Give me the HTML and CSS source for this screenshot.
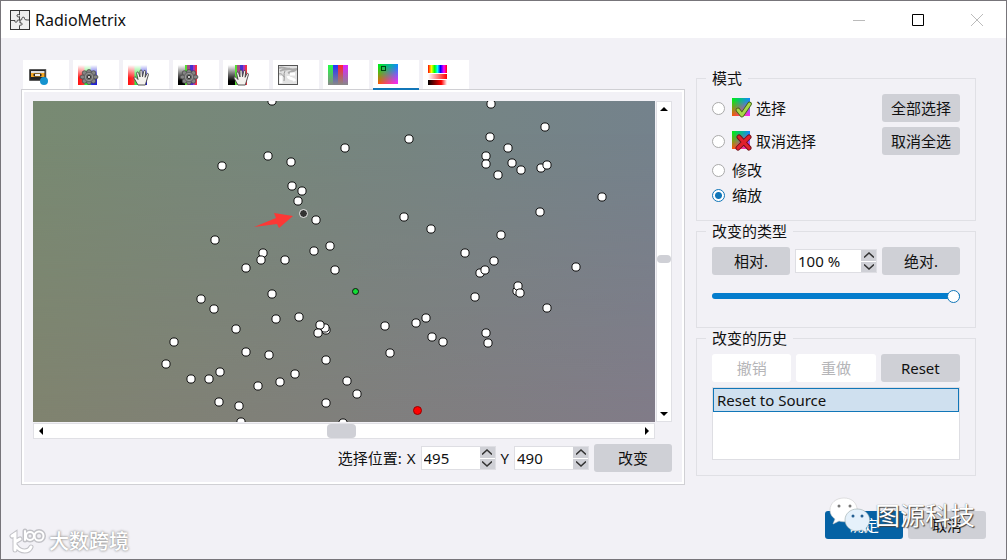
FILE: index.html
```html
<!DOCTYPE html>
<html lang="zh-CN">
<head>
<meta charset="utf-8">
<title>RadioMetrix</title>
<link rel="stylesheet" href="styles.css">
</head>
<body>
<svg class="defs" aria-hidden="true">
  <defs>
    <linearGradient id="rgb"><stop offset="0" stop-color="#f11"/><stop offset=".3" stop-color="#f33"/><stop offset=".38" stop-color="#3e4"/><stop offset=".62" stop-color="#3e4"/><stop offset=".72" stop-color="#22e"/><stop offset="1" stop-color="#22c"/></linearGradient>
    <linearGradient id="fade" x2="0" y2="1"><stop offset="0" stop-color="#fff"/><stop offset=".65" stop-color="#fff" stop-opacity="0"/></linearGradient>
    <linearGradient id="dark" x2="0" y2="1"><stop offset="0" stop-color="#fff"/><stop offset=".8" stop-color="#000"/></linearGradient>
    <linearGradient id="grayfade" x2="0" y2="1"><stop offset="0" stop-color="#888" stop-opacity="0"/><stop offset="1" stop-color="#888"/></linearGradient>
    <linearGradient id="hueA"><stop offset="0" stop-color="#0e1"/><stop offset="1" stop-color="#18f"/></linearGradient>
    <linearGradient id="hueB"><stop offset="0" stop-color="#f50"/><stop offset="1" stop-color="#f2f"/></linearGradient>
    <linearGradient id="down" x2="0" y2="1"><stop offset=".1" stop-color="#fff" stop-opacity="0"/><stop offset="1" stop-color="#fff"/></linearGradient>
    <mask id="downmask" maskContentUnits="objectBoundingBox"><rect width="1" height="1" fill="url(#down)"/></mask>
    <linearGradient id="rainbow"><stop offset="0" stop-color="#f00"/><stop offset=".18" stop-color="#ff0"/><stop offset=".35" stop-color="#0f0"/><stop offset=".5" stop-color="#0ff"/><stop offset=".66" stop-color="#00f"/><stop offset=".84" stop-color="#f0f"/><stop offset="1" stop-color="#f00"/></linearGradient>
    <linearGradient id="whitered"><stop offset="0" stop-color="#fff"/><stop offset="1" stop-color="#f00"/></linearGradient>
    <linearGradient id="blackred"><stop offset="0" stop-color="#000"/><stop offset=".7" stop-color="#f00"/><stop offset="1" stop-color="#fff"/></linearGradient>
    <symbol id="hue" viewBox="0 0 20 20"><rect width="20" height="20" fill="url(#hueA)"/><rect width="20" height="20" fill="url(#hueB)" mask="url(#downmask)"/></symbol>
    <symbol id="channels" viewBox="0 0 20 20"><rect width="19" height="20" fill="url(#rgb)"/><rect width="19" height="20" fill="url(#fade)"/></symbol>
    <symbol id="bars" viewBox="0 0 20 20"><rect width="7" height="20" fill="url(#dark)"/><rect x="7" width="2" height="20" fill="#5d3"/><rect x="9" width="3" height="20" fill="#a34a88"/><rect x="12" width="3" height="20" fill="#43c"/><rect x="15" width="2" height="20" fill="#a3b"/><rect x="17" width="2" height="20" fill="#e34"/></symbol>
    <symbol id="gear" viewBox="0 0 20 20">
      <g fill="#858585" stroke="#444" stroke-width=".7"><ellipse cx="10" cy="4" rx="2.4" ry="2.5"/><ellipse cx="10" cy="14" rx="2.4" ry="2.5"/><ellipse cx="4" cy="9" rx="3" ry="2.1"/><ellipse cx="16" cy="9" rx="3" ry="2.1"/><circle cx="5.5" cy="5" r="2.3"/><circle cx="14.5" cy="5" r="2.3"/><circle cx="5.5" cy="13" r="2.3"/><circle cx="14.5" cy="13" r="2.3"/></g>
      <circle cx="10" cy="9" r="5.2" fill="#666"/><circle cx="10" cy="9" r="3.7" fill="none" stroke="#999"/><circle cx="10" cy="9" r="1.6" fill="#ddd" stroke="#333"/>
    </symbol>
    <symbol id="hand" viewBox="0 0 17 18"><path d="M5 17 1.200 10.500C.6 9 2 8.300 3 9.400L5 11.500 3.600 5.400C3.400 3.800 5.200 3.500 5.700 5L7 9V3.200C7 1.500 9 1.500 9.100 3.200L9.500 8.700 10.700 3.400C11 1.900 12.800 2.200 12.700 3.700L12.100 9.300 13.600 6C14.300 4.800 15.800 5.400 15.400 6.800L13.500 13 12.300 17Z" fill="#f4f2ee" stroke="#444" stroke-width=".9"/></symbol>
    <symbol id="dot" viewBox="-5 -5 10 10"><circle r="4.1" fill="#fff" stroke="#111" stroke-width="1"/></symbol>
  </defs>
</svg>

<header class="titlebar">
  <svg class="app-icon" viewBox="0 0 20 20"><rect x=".5" y=".5" width="19" height="19" fill="#efefef" stroke="#333"/><path d="M9.500 1v4c-1-1-3-.5-2.500 1s2 1 2.500.5V10M1 10.500h4c-1 2 2.500 2.500 2 .5 0-1 1.500-1 3-1M9.500 10c1 0 2.500 0 2.500-1-1-2 3-2.500 2.500-.5 0 1.500 2 1.500 4.500 1.500M10 10v3c2-1 3 2 1 2.200-1.500 0-1-.5-1.500.5V19" fill="none" stroke="#444"/></svg>
  <h1>RadioMetrix</h1>
  <div class="window-buttons">
    <button aria-label="最小化"><svg viewBox="0 0 14 14"><path d="M1 7.5h12" stroke="#bbb"/></svg></button>
    <button aria-label="最大化"><svg viewBox="0 0 14 14"><path d="M1.5 1.5h11v11h-11z" stroke="#000"/></svg></button>
    <button aria-label="关闭"><svg viewBox="0 0 14 14"><path d="M1 1l12 12M13 1 1 13" stroke="#bbb"/></svg></button>
  </div>
</header>

<main class="content">
  <section class="editor">
    <div class="tabs" role="tablist">
      <button class="tab" role="tab" aria-label="预设"><svg viewBox="0 0 20 20"><rect x="1.700" y="4.700" width="16" height="10.600" fill="#222" stroke="#444"/><rect x="3" y="6" width="13.500" height="2" fill="#ddd"/><rect x="3" y="8" width="13.500" height="4" fill="#f5a623"/><rect x="5.500" y="8.500" width="8" height="3" rx="1" fill="#222"/><rect x="7" y="9" width="5" height="2" fill="#eee"/><circle cx="16" cy="16" r="4" fill="#1593cf"/></svg></button>
      <button class="tab" role="tab" aria-label="通道设置"><svg viewBox="0 0 20 20"><use href="#channels"/><use href="#gear" x="1" y="3"/></svg></button>
      <button class="tab" role="tab" aria-label="通道手动"><svg viewBox="0 0 20 20"><use href="#channels"/><use href="#hand" x="5" y="3" width="17" height="18"/></svg></button>
      <button class="tab" role="tab" aria-label="色调设置"><svg viewBox="0 0 20 20"><use href="#bars"/><use href="#gear" x="1" y="3"/></svg></button>
      <button class="tab" role="tab" aria-label="色调手动"><svg viewBox="0 0 20 20"><use href="#bars"/><use href="#hand" x="5" y="3" width="17" height="18"/></svg></button>
      <button class="tab" role="tab" aria-label="灰度"><svg viewBox="0 0 20 20"><rect x=".5" y=".5" width="19" height="19" fill="#e2e2e2"/><path d="M1 3c5-2 8 3 18 1M2 6c5-3 8 0 10-3M10 8c4-2 5-1 9-4" fill="none" stroke="#aaa" stroke-width="2"/><path d="M7 6c-2 3 0 6-1 10M1 9c2-1 4 1 5 3" fill="none" stroke="#999"/><path d="M3 11v7M10 11c1 4 5 1 7 5M12 9h5" fill="none" stroke="#fff" stroke-width="3"/><rect x=".5" y=".5" width="19" height="19" fill="none" stroke="#555"/></svg></button>
      <button class="tab" role="tab" aria-label="颜色条"><svg viewBox="0 0 20 20"><rect width="5" height="20" fill="#2f4"/><rect x="5" width="5" height="20" fill="#23f"/><rect x="10" width="5" height="20" fill="#f23"/><rect x="15" width="5" height="20" fill="#d2f"/><rect width="20" height="20" fill="url(#grayfade)"/></svg></button>
      <button class="tab active" role="tab" aria-selected="true" aria-label="色彩平面"><svg viewBox="0 0 20 20"><use href="#hue"/><rect x="3.5" y="2.5" width="4" height="4" fill="none" stroke="#041"/></svg></button>
      <button class="tab" role="tab" aria-label="色相"><svg viewBox="0 0 20 20"><rect x="0" width="19" height="8" fill="url(#rainbow)"/><rect y="9" width="19" height="5" fill="url(#whitered)"/><rect y="15" width="19" height="5" fill="url(#blackred)"/></svg></button>
    </div>
    <div class="panel">
      <div class="viewport">
        <svg class="plot" viewBox="33 101 622 321" preserveAspectRatio="xMidYMid slice">
          <defs>
            <linearGradient id="pt"><stop offset="0" stop-color="#788a72"/><stop offset="1" stop-color="#74828c"/></linearGradient>
            <linearGradient id="pb"><stop offset="0" stop-color="#80836f"/><stop offset=".5" stop-color="#807f7c"/><stop offset="1" stop-color="#817b88"/></linearGradient>
          </defs>
          <rect x="33" y="101" width="622" height="321" fill="url(#pt)"/>
          <rect x="33" y="101" width="622" height="321" fill="url(#pb)" mask="url(#downmask)"/>
          <g id="points"></g>
          <circle cx="303.500" cy="213.500" r="4" fill="#333" stroke="#eee"/>
          <circle cx="355.500" cy="291.500" r="3" fill="#1d3" stroke="#111"/>
          <circle cx="417.500" cy="410.500" r="4" fill="#f00" stroke="#900"/>
          <path d="M254 227 276 218 274 213 293 216 279 228 277 224Z" fill="#fc3835"/>
        </svg>
        <div class="scroll vertical"><button aria-label="向上"><svg viewBox="0 0 8 8"><path d="M0 6h8L4 2Z"/></svg></button><span class="track"><i></i></span><button aria-label="向下"><svg viewBox="0 0 8 8"><path d="M0 2h8L4 6Z"/></svg></button></div>
        <div class="scroll horizontal"><button aria-label="向左"><svg viewBox="0 0 8 8"><path d="M6 0v8L2 4Z"/></svg></button><span class="track"><i></i></span><button aria-label="向右"><svg viewBox="0 0 8 8"><path d="M2 0v8L6 4Z"/></svg></button></div>
      </div>
      <div class="position">
        <span>选择位置:</span>
        <label for="px">X</label>
        <div class="spin"><input id="px" value="495"><span class="steps"><button aria-label="增加"><svg viewBox="0 0 10 6"><path d="M0 5.500l5-4.500 5 4.500"/></svg></button><button aria-label="减少"><svg viewBox="0 0 10 6"><path d="M0 .5l5 4.500 5-4.500"/></svg></button></span></div>
        <label for="py">Y</label>
        <div class="spin"><input id="py" value="490"><span class="steps"><button aria-label="增加"><svg viewBox="0 0 10 6"><path d="M0 5.500l5-4.500 5 4.500"/></svg></button><button aria-label="减少"><svg viewBox="0 0 10 6"><path d="M0 .5l5 4.500 5-4.500"/></svg></button></span></div>
        <button class="btn">改变</button>
      </div>
    </div>
  </section>

  <aside class="options">
    <fieldset class="group">
      <legend>模式</legend>
      <div class="mode tall"><input type="radio" name="mode" id="m1"><label for="m1"><svg viewBox="0 0 20 20"><use href="#hue" width="18" height="18"/><path d="M6 12l4 5L17.500 6" fill="none" stroke="#3c6412" stroke-width="4.600" stroke-linecap="round" stroke-linejoin="round"/><path d="M6 12l4 5L17.500 6" fill="none" stroke="#a8d84a" stroke-width="3" stroke-linecap="round" stroke-linejoin="round"/></svg>选择</label><button class="btn">全部选择</button></div>
      <div class="mode tall"><input type="radio" name="mode" id="m2"><label for="m2"><svg viewBox="0 0 20 20"><use href="#hue" width="18" height="18"/><path d="M7 6l10 11M17 6 6 17" stroke="#701018" stroke-width="5" stroke-linecap="round"/><path d="M7 6l10 11M17 6 6 17" stroke="#e0202c" stroke-width="3.200" stroke-linecap="round"/></svg>取消选择</label><button class="btn">取消全选</button></div>
      <div class="mode"><input type="radio" name="mode" id="m3"><label for="m3">修改</label></div>
      <div class="mode"><input type="radio" name="mode" id="m4" checked><label for="m4">缩放</label></div>
    </fieldset>
    <fieldset class="group types">
      <legend>改变的类型</legend>
      <div class="amount">
        <button class="btn">相对.</button>
        <div class="spin"><input value="100 %" aria-label="百分比"><span class="steps"><button aria-label="增加"><svg viewBox="0 0 10 6"><path d="M0 5.500l5-4.500 5 4.500"/></svg></button><button aria-label="减少"><svg viewBox="0 0 10 6"><path d="M0 .5l5 4.500 5-4.500"/></svg></button></span></div>
        <button class="btn">绝对.</button>
      </div>
      <input class="slider" type="range" min="0" max="100" value="100" aria-label="改变量">
    </fieldset>
    <fieldset class="group">
      <legend>改变的历史</legend>
      <div class="history">
        <button class="btn" disabled>撤销</button>
        <button class="btn" disabled>重做</button>
        <button class="btn">Reset</button>
      </div>
      <ul class="list" role="listbox" aria-label="改变的历史"><li role="option" aria-selected="true">Reset to Source</li></ul>
    </fieldset>
  </aside>
</main>

<footer class="actions">
  <button class="btn primary">确定</button>
  <button class="btn">取消</button>
</footer>

<div class="mark mark-right">
  <svg viewBox="0 0 42 36"><path d="M16 1C8 1 2 6 2 13c0 4 2 7 5 9l-2 5 6-3c3 1 7 1 10 0C28 22 30 17 29 11 28 5 23 1 16 1Z" fill="#fff" stroke="#ccc" stroke-width=".6"/><path d="M29 12c-7 0-12 5-12 11s5 11 12 11l5-1 5 3-1-5c8-8 2-19-9-19Z" fill="#e5f1fb" stroke="#9aa" stroke-width=".6"/><g fill="#777"><circle cx="11" cy="9" r="1.500"/><circle cx="22" cy="9" r="1.500"/></g><g fill="#245f92"><circle cx="25" cy="19" r="1.500"/><circle cx="34" cy="19" r="1.500"/></g></svg>
  <span>图源科技</span>
</div>
<div class="mark mark-left">
  <svg viewBox="0 0 38 28"><g fill="none" stroke-linecap="round"><g stroke="#c2c2c7" stroke-width="5"><path d="M4 8l3-2v16M7 14l5-3M8 18c5 7 13 6 15 1"/><path d="M17 3v9"/><circle cx="22" cy="8" r="4"/><circle cx="31" cy="8" r="4.500"/></g><g stroke="#fff" stroke-width="3"><path d="M4 8l3-2v16M7 14l5-3M8 18c5 7 13 6 15 1"/></g><g stroke="#fff" stroke-width="2"><path d="M17 3v9"/><circle cx="22" cy="8" r="4"/><circle cx="31" cy="8" r="4.500"/></g></g></svg>
  <span>大数跨境</span>
</div>
<script src="points.js"></script>
</body>
</html>
```
FILE: points.js
```js
const points = [
  [272,101],[491,104],[545,127],[490,137],[409,139],[345,148],[508,148],[268,156],[291,162],[486,156],[486,164],[512,163],[521,170],[541,168],[547,165],[498,175],[222,166],
  [292,186],[302,191],[298,201],[316,220],[602,197],[404,217],[540,212],[431,229],[501,235],[215,240],[330,246],[314,251],[263,253],[261,260],[285,260],[246,268],[335,270],
  [465,253],[494,261],[480,273],[485,270],[576,267],[517,291],[518,286],[520,293],[475,297],[547,308],[272,294],[201,299],[214,309],[276,319],[299,317],[236,329],
  [326,330],[325,328],[320,325],[318,333],[385,326],[416,323],[426,318],[432,337],[443,342],[486,333],[488,343],[174,342],[166,364],[246,352],[269,355],[326,360],[390,353],
  [191,379],[209,379],[220,372],[258,386],[280,382],[295,374],[347,381],[357,394],[326,403],[219,402],[239,406],[241,422],[343,423]
];
const layer = document.getElementById("points");
for (const [x, y] of points) {
  const dot = document.createElementNS("http://www.w3.org/2000/svg", "use");
  dot.setAttribute("href", "#dot");
  dot.setAttribute("x", x - 5);
  dot.setAttribute("y", y - 5);
  dot.setAttribute("width", 10);
  dot.setAttribute("height", 10);
  layer.append(dot);
}
```
FILE: styles.css
```css
* { box-sizing: border-box; }
body {
  margin: 0;
  min-height: 100vh;
  display: flex;
  flex-direction: column;
  position: relative;
  border: 1px solid #77757a;
  background: #f2f1f6;
  color: #111;
  font: 15px/20px "Noto Sans", "Noto Sans CJK SC", sans-serif;
}
button, input { font: inherit; color: inherit; }
button { border: 0; padding: 0; background: none; }
svg { display: block; }
.defs { position: absolute; width: 0; height: 0; }

.titlebar { display: flex; align-items: center; height: 37px; padding-left: 9px; background: #fff; }
.app-icon { width: 20px; height: 20px; }
.titlebar h1 { margin: 0 0 0 5px; font-size: 16px; font-weight: 400; }
.window-buttons { display: flex; margin-left: auto; }
.window-buttons button { width: 59px; height: 37px; display: grid; place-items: center; }
.window-buttons svg { width: 14px; height: 14px; fill: none; }

.content { flex: 1; display: flex; gap: 11px; padding: 22px 30px 0 20px; }
.editor { flex: 1; min-width: 0; display: flex; flex-direction: column; }
.tabs { display: flex; gap: 4px; padding-left: 2px; }
.tab { width: 46px; height: 29px; padding: 4px 5px; background: #fff; }
.tab svg { width: 20px; height: 20px; overflow: visible; }
.tab.active { position: relative; height: 30px; margin-bottom: -1px; padding-top: 3px; border-bottom: 2px solid #1176b8; }
.panel { flex: 1; padding: 11px 12px 12px 11px; border: 1px solid #d0d0d4; box-shadow: inset 0 0 0 2px #fff; }
.viewport { display: grid; grid-template-columns: 1fr 16px; grid-template-rows: auto 16px; gap: 1px; }
.plot { width: 100%; }
.scroll { display: flex; background: #fff; border: 1px solid #e0e0e5; }
.scroll.vertical { flex-direction: column; }
.scroll button { width: 14px; height: 14px; display: grid; place-items: center; flex: none; }
.scroll svg { width: 8px; height: 8px; }
.track { flex: 1; display: flex; }
.vertical .track { flex-direction: column; }
.track::before { content: ""; flex: 139; }
.track::after { content: ""; flex: 144; }
.horizontal .track::before { flex: 279; }
.horizontal .track::after { flex: 284; }
.track i { flex: none; background: #cfd0d6; border-radius: 4px; }
.vertical i { height: 8px; }
.horizontal i { width: 29px; }
.position { display: flex; align-items: center; justify-content: flex-end; gap: 5px; margin-top: 5px; }
.position .spin { width: 75px; }
.position .btn { width: 78px; }

.btn { height: 28px; border-radius: 3px; background: #cfd0d6; text-align: center; }
.btn:disabled { background: #fff; color: #b5b5b8; }
.btn.primary { background: #0562a4; color: #fff; }
.spin { height: 24px; display: flex; border: 1px solid #dedee3; background: #fff; }
.spin input { flex: 1; min-width: 0; width: 0; border: 0; padding: 0 2px; background: transparent; }
.steps { width: 15px; display: flex; flex-direction: column; gap: 1px; }
.steps button { flex: 1; display: grid; place-items: center; background: #cfd0d6; }
.steps svg { width: 10px; height: 6px; fill: none; stroke: #333; stroke-width: 1.5; }

.options { width: 280px; flex: none; padding-top: 8px; }
.group { min-width: 0; margin: 0; padding: 6px 15px 15px; border: 1px solid #e0e0e5; }
.group legend { margin-left: -6px; padding: 0 6px; }
.mode { display: flex; align-items: center; height: 20px; }
.mode + .mode { margin-top: 5px; }
.mode.tall { height: 28px; }
.mode label { display: flex; align-items: center; gap: 4px; margin-left: 7px; }
.mode label svg { width: 20px; height: 20px; }
.mode .btn { width: 78px; margin-left: auto; }
.mode input { appearance: none; width: 13px; height: 13px; margin: 0; border: 1px solid #aaa; border-radius: 50%; background: #fff; }
.mode input:checked { border-color: #1176b8; background: radial-gradient(circle, #1176b8 3px, #fff 4px); }
.types { padding-bottom: 21px; }
.amount { display: grid; grid-template-columns: 78px 1fr 78px; gap: 5px; align-items: center; }
.slider { appearance: none; display: block; width: 100%; height: 20px; margin: 11px 0 0; background: transparent; }
.slider::-webkit-slider-runnable-track { height: 6px; border-radius: 3px; background: #047dcd; }
.slider::-webkit-slider-thumb { appearance: none; width: 13px; height: 13px; margin-top: -3px; border: 1px solid #1176b8; border-radius: 50%; background: #fff; }
.history { display: flex; gap: 5px; }
.history .btn { flex: 1; }
.list { height: 73px; margin: 5px 0 0; padding: 0; border: 1px solid #dedee3; background: #fff; list-style: none; }
.list li { height: 24px; padding: 1px 3px; border: 1px solid #1176b8; background: #cfe0ef; }

.actions { display: flex; justify-content: flex-end; gap: 5px; margin-top: 26px; padding: 0 20px 20px 0; }
.actions .btn { width: 78px; }

.mark { position: absolute; display: flex; align-items: center; color: #fff; pointer-events: none; }
.mark-right { right: 31px; bottom: 26px; gap: 5px; font-size: 25px; line-height: 36px; text-shadow: 1px 1px 1px #444, 0 0 1px #666; }
.mark-right svg { width: 42px; height: 36px; }
.mark-left { left: 7px; bottom: 3px; gap: 3px; font-size: 20px; line-height: 28px; font-weight: 500; text-shadow: 0 0 2px #999, 0 0 3px #999; }
.mark-left svg { width: 38px; height: 28px; }
```
